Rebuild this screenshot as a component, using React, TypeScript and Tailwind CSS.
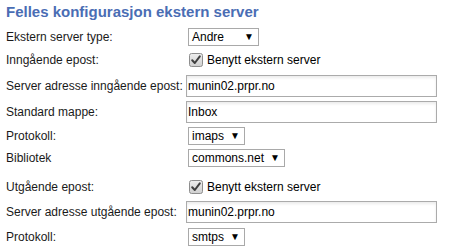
import React from "react";

function Label({ children }: { children: React.ReactNode }) {
  return <div className="w-[186px] shrink-0 pl-[6px] text-[12px] text-[#1a1a1a]">{children}</div>;
}

function Select({ value, className = "" }: { value: string; className?: string }) {
  return (
    <div
      className={`ml-[2px] flex h-[18px] items-center border border-[#a9a9a9] bg-white pl-[3px] pr-[4px] text-[12px] text-black ${className}`}
    >
      <span className="flex-1">{value}</span>
      <span className="ml-[6px] text-[10px] leading-none">▼</span>
    </div>
  );
}

function TextField({ value }: { value: string }) {
  return (
    <input
      readOnly
      defaultValue={value}
      className="h-[22px] w-[251px] border border-[#ababab] bg-white pl-[1px] text-[12px] text-black shadow-[inset_0_2px_3px_rgba(0,0,0,0.08)] outline-none"
    />
  );
}

function Check({ label }: { label: string }) {
  return (
    <div className="ml-[3px] flex items-center gap-[4px] text-[12px] text-black">
      <svg width="14" height="14" viewBox="0 0 14 14">
        <defs>
          <linearGradient id="cb" x1="0" y1="0" x2="0" y2="1">
            <stop offset="0" stopColor="#eeeeee" />
            <stop offset="1" stopColor="#cfcfcf" />
          </linearGradient>
        </defs>
        <rect x="0.5" y="0.5" width="13" height="13" rx="2" fill="url(#cb)" stroke="#8e8e8e" />
        <path d="M3.2 7.2 L5.8 10 L10.8 3.4" fill="none" stroke="#3f3f3f" strokeWidth="2" strokeLinecap="round" strokeLinejoin="round" />
      </svg>
      <span>{label}</span>
    </div>
  );
}

function Row({ h, children }: { h: string; children: React.ReactNode }) {
  return <div className={`flex items-center ${h}`}>{children}</div>;
}

export default function App() {
  return (
    <div className="h-[252px] w-[461px] bg-white font-['Liberation_Sans',Arial,sans-serif]">
      <h2 className="flex h-[25px] items-center pl-[6px] text-[15px] font-bold text-[#4a6db4]">
        Felles konfigurasjon ekstern server
      </h2>
      <Row h="h-[23px]">
        <Label>Ekstern server type:</Label>
        <Select value="Andre" className="w-[71px]" />
      </Row>
      <Row h="h-[24px]">
        <Label>Inngående epost:</Label>
        <Check label="Benytt ekstern server" />
      </Row>
      <Row h="h-[27px]">
        <Label>Server adresse inngående epost:</Label>
        <TextField value="munin02.prpr.no" />
      </Row>
      <Row h="h-[26px]">
        <Label>Standard mappe:</Label>
        <TextField value="Inbox" />
      </Row>
      <Row h="h-[22px]">
        <Label>Protokoll:</Label>
        <Select value="imaps" />
      </Row>
      <Row h="h-[22px]">
        <Label>Bibliotek</Label>
        <Select value="commons.net" />
      </Row>
      <div className="h-[6px]" />
      <Row h="h-[24px]">
        <Label>Utgående epost:</Label>
        <Check label="Benytt ekstern server" />
      </Row>
      <Row h="h-[26px]">
        <Label>Server adresse utgående epost:</Label>
        <TextField value="munin02.prpr.no" />
      </Row>
      <Row h="h-[24px]">
        <Label>Protokoll:</Label>
        <Select value="smtps" />
      </Row>
    </div>
  );
}
